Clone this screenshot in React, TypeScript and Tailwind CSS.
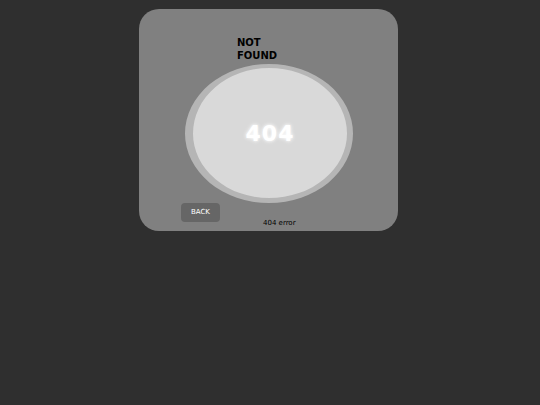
import React from 'react';

export default function App() {
  return (
    <div className="min-h-[405px] w-full bg-[#2f2f2f] pt-[9px] font-['DejaVu_Sans',sans-serif]">
      {/* Card */}
      <div className="ml-[139px] w-[259px] h-[222px] rounded-[20px] bg-[#808080] pt-[27px]">
        <h1 className="pl-[98px] text-[10px] leading-[13px] font-bold text-black">
          NOT
          <br />
          FOUND
        </h1>

        {/* Oval */}
        <div className="ml-[46px] mt-[2px] w-[168px] h-[139px] rounded-[50%] bg-[#d9d9d9] border-[#b5b5b5] border-l-[8px] border-r-[6px] border-t-[4px] border-b-[5px] flex items-center justify-center">
          <span className="text-[22px] font-bold tracking-[1px] text-white [text-shadow:0_0_2px_#fff,0_0_4px_#fff,0_0_1px_rgba(0,0,0,0.25)]">
            404
          </span>
        </div>

        <div className="flex items-start">
          <button className="ml-[42px] w-[39px] h-[19px] rounded-[4px] bg-[#666666] text-[7px] text-white flex items-center justify-center">
            BACK
          </button>
          <span className="ml-[43px] mt-[16px] text-[7px] leading-[8px] text-black">404 error</span>
        </div>
      </div>
    </div>
  );
}
